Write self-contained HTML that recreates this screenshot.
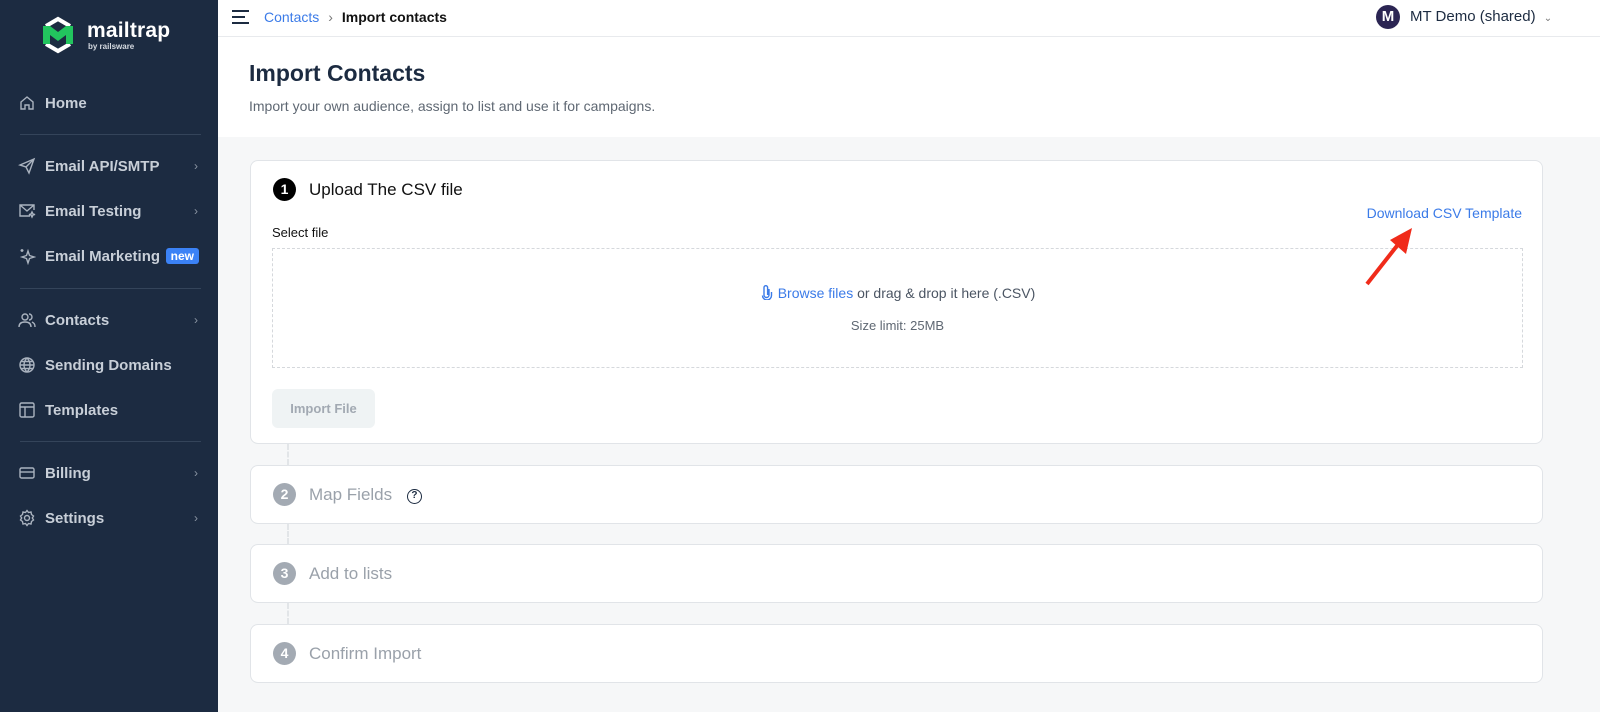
<!DOCTYPE html>
<html><head><meta charset="utf-8"><style>
*{box-sizing:border-box;margin:0;padding:0}
body{width:1600px;height:712px;overflow:hidden;font-family:"Liberation Sans",Arial,sans-serif;background:#f6f7f8;position:relative}
.sb{position:absolute;left:0;top:0;width:218px;height:712px;background:#1c2b41}
.it{position:absolute;left:18px;color:#c8cfd8;font-size:15px;font-weight:bold;display:flex;align-items:center;width:182px}
.it svg{width:18px;height:18px;margin-right:9px;fill:none;stroke:#aab3bf;stroke-width:1.4}
.it .ch{position:absolute;right:2px;color:#8b95a3;font-weight:normal;font-size:12px}
.hr{position:absolute;left:20px;width:181px;height:1px;background:#34445a}
.top{position:absolute;left:218px;top:0;right:0;height:37px;background:#fff;border-bottom:1px solid #e8eaed}
.head{position:absolute;left:218px;top:37px;right:0;height:100px;background:#fff}
.card{position:absolute;left:250px;width:1293px;background:#fff;border:1px solid #e1e4e8;border-radius:8px}
.num{position:absolute;left:22px;width:23px;height:23px;border-radius:50%;color:#fff;font-weight:bold;font-size:14px;text-align:center;line-height:23px}
.ttl{position:absolute;left:58px;font-size:17px}
.con{position:absolute;left:287px;width:0;border-left:2px dashed #e2e5e8}
</style></head><body>
<div class="sb">
 <svg style="position:absolute;left:40px;top:16px" width="36" height="38" viewBox="0 0 36 38"><path d="M6 10 L18 3 L30 10" stroke="#fff" stroke-width="4" fill="none"/><path d="M6 28 L18 35 L30 28" stroke="#fff" stroke-width="4" fill="none"/><path d="M3 10 L3 28 L10 28 L10 19 L18 25 L26 19 L26 28 L33 28 L33 10 L26 10 L18 16 L10 10Z" fill="#22c55e"/></svg>
 <div style="position:absolute;left:87px;top:19px;color:#fff;font-size:21px;font-weight:bold;letter-spacing:0.2px">mailtrap</div>
 <div style="position:absolute;left:88px;top:42px;color:#d6dbe2;font-size:8px;font-weight:bold">by railsware</div>
 <div class="it" style="top:94px"><svg viewBox="0 0 18 18"><path d="M3 8 L9 3 L15 8 V15 H11 V11 H7 V15 H3Z"/></svg>Home</div>
 <div class="hr" style="top:134px"></div>
 <div class="it" style="top:157px"><svg viewBox="0 0 18 18"><path d="M2 8 L16 2 L11 16 L8 10Z M8 10 L16 2"/></svg>Email API/SMTP<span class="ch">›</span></div>
 <div class="it" style="top:202px"><svg viewBox="0 0 18 18"><path d="M12 14H2V3H16V8 M2 3L9 9L16 3 M14 10l1 2 2 .5-2 .5-1 2-1-2-2-.5 2-.5z"/></svg>Email Testing<span class="ch">›</span></div>
 <div class="it" style="top:247px"><svg viewBox="0 0 18 18"><path d="M10 4 L11.5 8.5 L16 10 L11.5 11.5 L10 16 L8.5 11.5 L4 10 L8.5 8.5Z M4 2v3 M2.5 3.5h3"/></svg>Email Marketing<span style="position:absolute;right:1px;background:#3b82f6;color:#fff;font-size:12px;padding:1px 5px;border-radius:3px;top:1px">new</span></div>
 <div class="hr" style="top:288px"></div>
 <div class="it" style="top:311px"><svg viewBox="0 0 18 18"><circle cx="7" cy="6" r="3"/><path d="M1 16c0-4 3-5 6-5s6 1 6 5 M11 3a3 3 0 0 1 0 6 M14 11c2 1 3 2 3 5"/></svg>Contacts<span class="ch">›</span></div>
 <div class="it" style="top:356px"><svg viewBox="0 0 18 18"><circle cx="9" cy="9" r="7"/><path d="M2 9h14 M9 2c-4 4-4 10 0 14 M9 2c4 4 4 10 0 14 M3 5.5h12 M3 12.5h12"/></svg>Sending Domains</div>
 <div class="it" style="top:401px"><svg viewBox="0 0 18 18"><rect x="2" y="2" width="14" height="14" rx="1.5"/><path d="M2 6h14 M7 6v10"/></svg>Templates</div>
 <div class="hr" style="top:441px"></div>
 <div class="it" style="top:464px"><svg viewBox="0 0 18 18"><rect x="2" y="4" width="14" height="10" rx="1.5"/><path d="M2 8h14"/></svg>Billing<span class="ch">›</span></div>
 <div class="it" style="top:509px"><svg viewBox="0 0 18 18"><circle cx="9" cy="9" r="2.5"/><path d="M9 1.5l1.5 2 2.5-.5.5 2.5 2 1.5-1.2 2 1.2 2-2 1.5-.5 2.5-2.5-.5-1.5 2-1.5-2-2.5.5-.5-2.5-2-1.5 1.2-2-1.2-2 2-1.5.5-2.5 2.5.5z"/></svg>Settings<span class="ch">›</span></div>
</div>
<div class="top">
 <div style="position:absolute;left:14px;top:10px;width:17px"><div style="height:2px;background:#1c2b41;width:17px"></div><div style="height:2px;background:#1c2b41;width:13px;margin-top:4px"></div><div style="height:2px;background:#1c2b41;width:17px;margin-top:4px"></div></div>
 <div style="position:absolute;left:46px;top:9px;font-size:14px"><span style="color:#3b7be8">Contacts</span><span style="color:#777;margin:0 9px">›</span><b style="color:#111">Import contacts</b></div>
 <div style="position:absolute;left:1158px;top:5px;width:24px;height:24px;border-radius:50%;background:#2b2553;color:#fff;font-weight:bold;font-size:15px;text-align:center;line-height:24px">M</div>
 <div style="position:absolute;left:1192px;top:8px;font-size:15px;color:#1c2b41">MT Demo (shared) <span style="font-size:10px;color:#777;margin-left:4px">⌄</span></div>
</div>
<div class="head">
 <div style="position:absolute;left:31px;top:23px;font-size:23px;font-weight:bold;color:#1c2b41">Import Contacts</div>
 <div style="position:absolute;left:31px;top:61px;font-size:14px;color:#5f6873">Import your own audience, assign to list and use it for campaigns.</div>
</div>
<div class="card" style="top:160px;height:284px">
 <div class="num" style="top:17px;background:#000">1</div>
 <div class="ttl" style="top:19px;color:#111">Upload The CSV file</div>
 <div style="position:absolute;right:20px;top:44px;font-size:14px;color:#3b7be8">Download CSV Template</div>
 <div style="position:absolute;left:21px;top:64px;font-size:13px;color:#111">Select file</div>
 <div style="position:absolute;left:21px;top:87px;width:1251px;height:120px;border:1px dashed #d5d8dc">
  <div style="position:absolute;left:0;right:0;top:35px;text-align:center;font-size:14px;color:#4b5563"><span style="color:#3b7be8"><svg width="14" height="16" viewBox="0 0 14 16" style="vertical-align:-2px;margin-right:4px" fill="none" stroke="#3b7be8" stroke-width="1.4"><path d="M9 5V11a2.5 2.5 0 0 1-5 0V3.5a1.8 1.8 0 0 1 3.6 0V11"/><path d="M11.5 8v3.5a4.5 4.5 0 0 1-9 0"/></svg>Browse files</span> or drag &amp; drop it here (.CSV)</div>
  <div style="position:absolute;left:0;right:0;top:69px;text-align:center;font-size:13px;color:#5f6873">Size limit: 25MB</div>
 </div>
 <div style="position:absolute;left:21px;top:228px;width:103px;height:39px;background:#eff3f4;border-radius:6px;color:#a2a9b2;font-weight:bold;font-size:13px;text-align:center;line-height:39px">Import File</div>
</div>
<svg style="position:absolute;left:1362px;top:222px" width="56" height="66" viewBox="0 0 56 66"><path d="M5 62 L38 20" stroke="#f02b1a" stroke-width="4"/><path d="M50 6 L28 18 L44 32Z" fill="#f02b1a"/></svg>
<div class="con" style="top:444px;height:21px"></div>
<div class="card" style="top:465px;height:59px"><div class="num" style="top:17px;background:#a3aab3">2</div><div class="ttl" style="top:19px;color:#9aa1aa">Map Fields <span style="display:inline-block;width:15px;height:15px;border:1.5px solid #1c2b41;border-radius:50%;font-size:10px;color:#1c2b41;text-align:center;line-height:12px;margin-left:10px;vertical-align:2px;font-weight:bold">?</span></div></div>
<div class="con" style="top:524px;height:20px"></div>
<div class="card" style="top:544px;height:59px"><div class="num" style="top:17px;background:#a3aab3">3</div><div class="ttl" style="top:19px;color:#9aa1aa">Add to lists</div></div>
<div class="con" style="top:603px;height:21px"></div>
<div class="card" style="top:624px;height:59px"><div class="num" style="top:17px;background:#a3aab3">4</div><div class="ttl" style="top:19px;color:#9aa1aa">Confirm Import</div></div>
</body></html>
